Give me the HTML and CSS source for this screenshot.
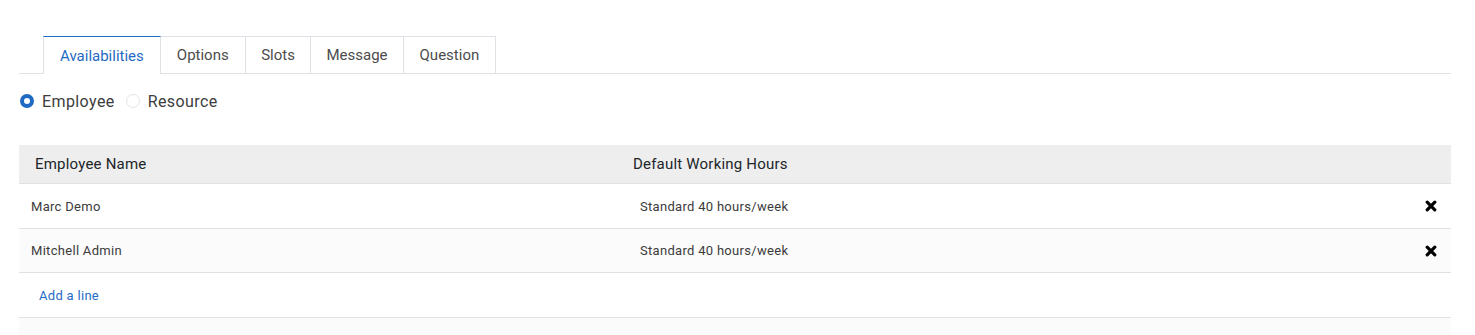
FILE: index.html
```html
<!DOCTYPE html>
<html>
<head>
<meta charset="utf-8">
<link rel="stylesheet" href="styles.css">
</head>
<body>
<div class="page">
  <ul class="tabs">
    <li class="tab active">Availabilities</li>
    <li class="tab">Options</li>
    <li class="tab slots">Slots</li>
    <li class="tab msg">Message</li>
    <li class="tab">Question</li>
  </ul>
  <div class="radios">
    <label class="radio"><span class="dot checked"></span>Employee</label>
    <label class="radio"><span class="dot"></span>Resource</label>
  </div>
  <div class="table">
    <div class="row head">
      <div class="c1">Employee Name</div>
      <div class="c2">Default Working Hours</div>
      <div class="c3"></div>
    </div>
    <div class="row">
      <div class="c1">Marc Demo</div>
      <div class="c2">Standard 40 hours/week</div>
      <div class="c3"><svg class="del" viewBox="0 0 12 12" width="12" height="12"><path d="M2.2 2.2L9.8 9.8M9.8 2.2L2.2 9.8" stroke="#000" stroke-width="3.2" stroke-linecap="round"/></svg></div>
    </div>
    <div class="row alt">
      <div class="c1">Mitchell Admin</div>
      <div class="c2">Standard 40 hours/week</div>
      <div class="c3"><svg class="del" viewBox="0 0 12 12" width="12" height="12"><path d="M2.2 2.2L9.8 9.8M9.8 2.2L2.2 9.8" stroke="#000" stroke-width="3.2" stroke-linecap="round"/></svg></div>
    </div>
    <div class="row">
      <div class="c1 add">Add a line</div>
      <div class="c2"></div>
      <div class="c3"></div>
    </div>
    <div class="row alt last"></div>
  </div>
</div>
</body>
</html>
```
FILE: styles.css
```css
html, body { margin: 0; padding: 0; background: #fff; }
body { font-family: Roboto, "Noto Sans", sans-serif; color: #212529; }
.page { padding: 36px 24px 0 19px; }
.tabs {
  list-style: none; margin: 0; padding: 0 0 0 24px;
  display: flex; border-bottom: 1px solid #dee2e6; height: 37px;
}
.tab {
  padding: 0 16px; height: 37px; box-sizing: border-box;
  display: flex; align-items: center;
  font-size: 15px; color: #4c4c4c;
  border: 1px solid #dee2e6; border-left: none; border-bottom: none;
  background: #fff;
}
.tab.active {
  color: #1f6bc4; border-top: 1px solid #1f6bc4;
  border-left: 1px solid #dee2e6;
  height: 38px; margin-bottom: -1px;
}
.tab.slots { padding: 0 15.5px; }
.tab.msg { padding: 0 15px; }
.radios { display: flex; align-items: center; gap: 10px; margin-top: 16px; height: 22px; }
.radio { display: flex; align-items: center; font-size: 16px; letter-spacing: 0.4px; color: #3d3d3d; }
.dot {
  width: 14px; height: 14px; border-radius: 50%; box-sizing: border-box;
  border: 1px solid #e4e4e4; margin: 0 8px 0 1px; background: #fff;
}
.dot.checked { border: 4px solid #1f6bc4; }
.table { margin-top: 33px; }
.row {
  display: grid; grid-template-columns: 609px 1fr 40px;
  height: 45px; border-bottom: 1px solid #dee2e6; box-sizing: border-box;
  align-items: center; font-size: 13px; letter-spacing: 0.3px; color: #3b3b3b;
}
.row.head { height: 39px; background: #eeeeee; font-size: 15px; letter-spacing: 0.2px; color: #212529; }
.row.alt { height: 44px; background: #fbfbfb; }
.row.head .c1 { padding-left: 16px; }
.row.head .c2 { padding-left: 5px; }
.c1 { padding-left: 12px; }
.c2 { padding-left: 12px; }
.c3 { display: flex; justify-content: flex-start; padding-left: 14px; }
.row.last { border-bottom: none; height: 18px; }
.add { color: #1f6bc4; padding-left: 20px; }
.del { display: block; }
```
